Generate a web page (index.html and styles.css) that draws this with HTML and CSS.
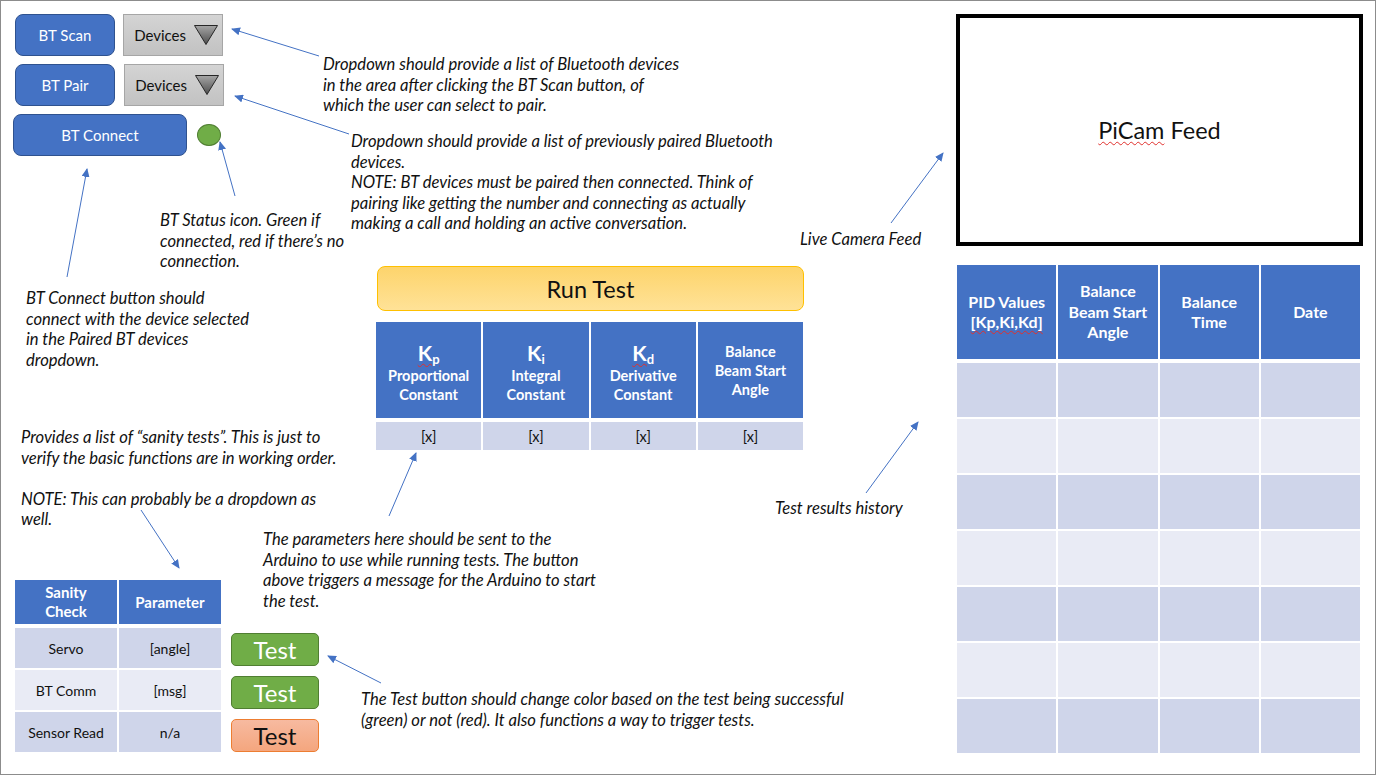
FILE: index.html
```html
<!DOCTYPE html>
<html lang="en">
<head>
  <meta charset="UTF-8" />
  <meta name="viewport" content="width=device-width, initial-scale=1.0" />
  <title>Balance Beam Control - Wireframe</title>
  <link rel="stylesheet" href="styles.css">
</head>
<body>
  <div class="slide">

    <!-- bluetooth controls -->
    <div class="bt-panel">
      <div class="bt-row">
        <button class="btn-blue btn-sm">BT Scan</button>
        <div class="dropdown">Devices
          <svg class="tri" viewBox="0 0 24 20"><path d="M0.5 0.5 H23.5 L12 19.5 Z" fill="url(#triFill)" stroke="#262626" stroke-width="1"/></svg>
        </div>
      </div>
      <div class="bt-row gap-9">
        <button class="btn-blue btn-sm">BT Pair</button>
        <div class="dropdown">Devices
          <svg class="tri" viewBox="0 0 24 20"><path d="M0.5 0.5 H23.5 L12 19.5 Z" fill="url(#triFill)" stroke="#262626" stroke-width="1"/></svg>
        </div>
      </div>
      <div class="bt-row connect-row">
        <button class="btn-blue btn-wide">BT Connect</button>
        <span class="status-dot"></span>
      </div>
    </div>

    <p class="note note-scan">Dropdown should provide a list of Bluetooth devices<br>in the area after clicking the BT Scan button, of<br>which the user can select to pair.</p>
    <p class="note note-pair">Dropdown should provide a list of previously paired Bluetooth<br>devices.<br>NOTE: BT devices must be paired then connected. Think of<br>pairing like getting the number and connecting as actually<br>making a call and holding an active conversation.</p>
    <p class="note note-status">BT Status icon. Green if<br>connected, red if there’s no<br>connection.</p>
    <p class="note note-connect">BT Connect button should<br>connect with the device selected<br>in the Paired BT devices<br>dropdown.</p>
    <p class="note note-sanity">Provides a list of “sanity tests”. This is just to<br>verify the basic functions are in working order.<br><br>NOTE: This can probably be a dropdown as<br>well.</p>
    <p class="note note-params">The parameters here should be sent to the<br>Arduino to use while running tests. The button<br>above triggers a message for the Arduino to start<br>the test.</p>
    <p class="note note-test">The Test button should change color based on the test being successful<br>(green) or not (red). It also functions a way to trigger tests.</p>
    <p class="note note-cam">Live Camera Feed</p>
    <p class="note note-history">Test results history</p>

    <!-- run test + PID params -->
    <div class="run-panel">
      <button class="btn-run">Run Test</button>
      <table class="grid param-table">
        <thead>
          <tr>
            <th class="kh"><span class="k"><span class="squiggle">K<sub>p</sub></span></span>Proportional<br>Constant</th>
            <th class="kh"><span class="k">K<sub>i</sub></span>Integral<br>Constant</th>
            <th class="kh"><span class="k"><span class="squiggle">K<sub>d</sub></span></span>Derivative<br>Constant</th>
            <th>Balance<br>Beam Start<br>Angle</th>
          </tr>
        </thead>
        <tbody>
          <tr><td>[x]</td><td>[x]</td><td>[x]</td><td>[x]</td></tr>
        </tbody>
      </table>
    </div>

    <!-- sanity checks -->
    <div class="sanity-panel">
      <table class="grid sanity-table">
        <thead>
          <tr><th>Sanity<br>Check</th><th>Parameter</th></tr>
        </thead>
        <tbody>
          <tr><td>Servo</td><td>[angle]</td></tr>
          <tr><td>BT Comm</td><td>[msg]</td></tr>
          <tr><td>Sensor Read</td><td>n/a</td></tr>
        </tbody>
      </table>
      <div class="test-col">
        <button class="btn-test pass">Test</button>
        <button class="btn-test pass">Test</button>
        <button class="btn-test fail">Test</button>
      </div>
    </div>

    <!-- camera -->
    <div class="cam-box"><span class="squiggle">PiCam</span>&nbsp;Feed</div>

    <!-- history -->
    <table class="grid history-table">
      <thead>
        <tr>
          <th>PID Values<br><span class="squiggle">[Kp,Ki,Kd]</span></th>
          <th>Balance<br>Beam Start<br>Angle</th>
          <th>Balance<br>Time</th>
          <th>Date</th>
        </tr>
      </thead>
      <tbody>
        <tr><td></td><td></td><td></td><td></td></tr>
        <tr><td></td><td></td><td></td><td></td></tr>
        <tr><td></td><td></td><td></td><td></td></tr>
        <tr><td></td><td></td><td></td><td></td></tr>
        <tr><td></td><td></td><td></td><td></td></tr>
        <tr><td></td><td></td><td></td><td></td></tr>
        <tr><td></td><td></td><td></td><td></td></tr>
      </tbody>
    </table>

    <!-- callout arrows -->
    <svg class="arrows" width="1376" height="775" viewBox="0 0 1376 775">
      <defs>
        <linearGradient id="triFill" x1="0" y1="0" x2="0" y2="1">
          <stop offset="0" stop-color="#a6a6a6"/>
          <stop offset="1" stop-color="#4d4d4d"/>
        </linearGradient>
        <marker id="head" markerWidth="9" markerHeight="8" refX="8" refY="4" orient="auto" markerUnits="userSpaceOnUse">
          <path d="M0 0 L9 4 L0 8 Z" fill="#4472c4"/>
        </marker>
      </defs>
      <g stroke="#4472c4" stroke-width="1" marker-end="url(#head)">
        <line x1="318" y1="55" x2="231" y2="28"/>
        <line x1="348" y1="133" x2="234" y2="95"/>
        <line x1="234" y1="195" x2="219" y2="141"/>
        <line x1="66" y1="276" x2="86" y2="168"/>
        <line x1="140" y1="509" x2="178" y2="567"/>
        <line x1="388" y1="515" x2="415" y2="452"/>
        <line x1="380" y1="682" x2="327" y2="655"/>
        <line x1="890" y1="222" x2="942" y2="152"/>
        <line x1="865" y1="492" x2="917" y2="421"/>
      </g>
    </svg>
  </div>
</body>
</html>
```

FILE: styles.css
```css
body {
  margin: 0;
  background: #fff;
  font-family: 'Lato', 'Liberation Sans', sans-serif;
}

.slide {
  position: relative;
  width: 1376px;
  height: 775px;
  box-sizing: border-box;
  border: 1px solid #8c8c8c;
  background: #fff;
  overflow: hidden;
}

button {
  font-family: inherit;
  cursor: pointer;
}

/* bluetooth */
.bt-panel {
  position: absolute;
  left: 12px;
  top: 13px;
  display: flex;
  flex-direction: column;
  gap: 8px;
}

.bt-row {
  display: flex;
  align-items: center;
  gap: 8px;
  padding-left: 2px;
}

.bt-row.gap-9 {
  gap: 9px;
}

.connect-row {
  padding-left: 0;
  gap: 10px;
}

.btn-blue {
  height: 42px;
  background: #4472c4;
  border: 1px solid #2f528f;
  border-radius: 8px;
  color: #fff;
  font-size: 15px;
  padding: 0;
}

.btn-sm {
  width: 100px;
}

.btn-wide {
  width: 174px;
}

.dropdown {
  width: 100px;
  height: 42px;
  box-sizing: border-box;
  background: linear-gradient(#d4d4d4, #c2c2c2);
  border: 1px solid #a6a6a6;
  display: flex;
  align-items: center;
  justify-content: flex-end;
  gap: 8px;
  padding-right: 4px;
  font-size: 15px;
  color: #111;
}

.tri {
  width: 24px;
  height: 20px;
}

.status-dot {
  width: 22px;
  height: 20px;
  border-radius: 50%;
  background: #70ad47;
  border: 1px solid #507e32;
}

/* notes */
.note {
  position: absolute;
  margin: 0;
  font-style: italic;
  font-size: 16.6px;
  line-height: 20.5px;
  color: #111;
  white-space: nowrap;
}

.note-scan { left: 322px; top: 53px; }
.note-pair { left: 350px; top: 130px; }
.note-status { left: 159px; top: 209px; }
.note-connect { left: 25px; top: 287px; }
.note-sanity { left: 20px; top: 426px; }
.note-params { left: 262px; top: 528px; }
.note-test { left: 360px; top: 688px; }
.note-cam { left: 799px; top: 228px; }
.note-history { left: 774px; top: 497px; }

.squiggle {
  text-decoration: underline wavy #e0302c;
  text-decoration-thickness: 1px;
  text-underline-offset: 2px;
}

/* tables */
.grid {
  border-collapse: collapse;
  table-layout: fixed;
}

.grid th,
.grid td {
  border: 2px solid #fff;
  text-align: center;
  padding: 0;
}

.grid th {
  background: #4472c4;
  color: #fff;
  font-weight: 700;
  border-bottom-width: 4px;
}

.grid tbody tr:nth-child(odd) td {
  background: #cfd5ea;
}

.grid tbody tr:nth-child(even) td {
  background: #e9ebf5;
}

/* run test */
.run-panel {
  position: absolute;
  left: 375px;
  top: 265px;
  width: 429px;
  display: flex;
  flex-direction: column;
  gap: 9px;
}

.btn-run {
  margin-left: 1px;
  width: 427px;
  height: 45px;
  background: linear-gradient(#fdd46c, #ffe297);
  border: 1px solid #ffc000;
  border-radius: 8px;
  font-size: 23.5px;
  color: #111;
}

.param-table {
  margin-left: -2px;
  width: 431px;
}

.param-table th {
  height: 93px;
  font-size: 14.5px;
  line-height: 19px;
}

.param-table th.kh {
  padding-top: 3px;
}

.param-table .k {
  display: block;
  font-size: 21px;
  line-height: 26px;
}

.param-table sub {
  font-size: 13px;
  line-height: 0;
  vertical-align: -3px;
}

.param-table td {
  height: 28px;
  font-size: 14.5px;
  color: #111;
}

/* sanity */
.sanity-panel {
  position: absolute;
  left: 12px;
  top: 577px;
  display: flex;
  align-items: flex-end;
  gap: 8px;
}

.sanity-table {
  width: 210px;
}

.sanity-table th {
  height: 44px;
  font-size: 15px;
  line-height: 19px;
}

.sanity-table td {
  height: 40px;
  font-size: 14px;
  color: #111;
}

.test-col {
  display: flex;
  flex-direction: column;
  gap: 10px;
  padding-bottom: 2px;
}

.btn-test {
  width: 88px;
  height: 33px;
  border-radius: 5px;
  font-size: 24px;
  line-height: 1;
  padding: 0;
}

.btn-test.pass {
  background: #70ad47;
  border: 1px solid #507e32;
  color: #fff;
}

.btn-test.fail {
  background: linear-gradient(#f7baa0, #f4a67e);
  border: 1px solid #ed7d31;
  color: #111;
}

/* camera */
.cam-box {
  position: absolute;
  left: 955px;
  top: 13px;
  width: 407px;
  height: 232px;
  box-sizing: border-box;
  border: 4px solid #000;
  display: flex;
  align-items: center;
  justify-content: center;
  font-size: 23.5px;
  color: #111;
}

/* history */
.history-table {
  position: absolute;
  left: 954px;
  top: 262px;
  width: 407px;
}

.history-table th {
  height: 94px;
  font-size: 16px;
  line-height: 20.5px;
}

.history-table td {
  height: 54px;
}

.arrows {
  position: absolute;
  left: 0;
  top: 0;
  pointer-events: none;
}
```
